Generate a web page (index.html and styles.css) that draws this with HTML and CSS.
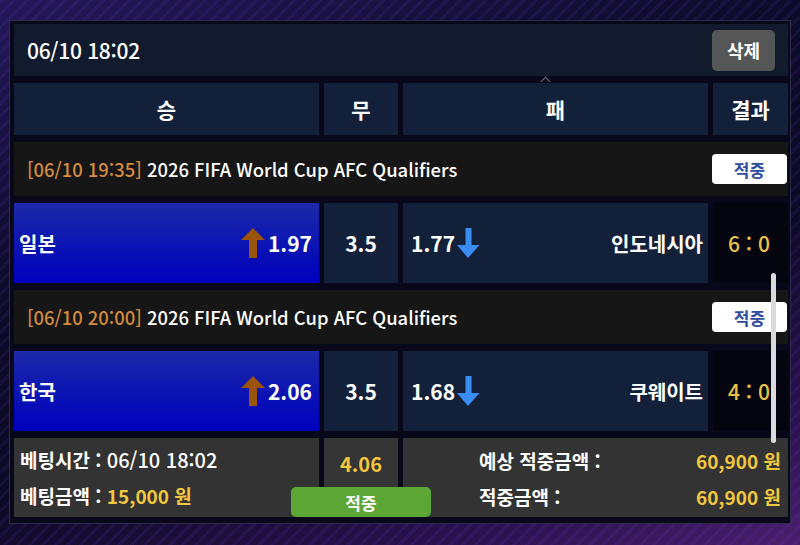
FILE: index.html
```html
<!DOCTYPE html>
<html lang="ko">
<head>
<meta charset="utf-8">
<title>베팅내역</title>
<link rel="stylesheet" href="styles.css">
</head>
<body>
<div class="frame">
  <div class="topbar">
    <span class="bet-time">06/10 18:02</span>
    <button class="del">삭제</button>
  </div>

  <div class="row head">
    <div class="hcell">승</div>
    <div class="hcell">무</div>
    <div class="hcell">패</div>
    <div class="hcell">결과</div>
  </div>

  <div class="league">
    <span class="ltext"><span class="ltime">[06/10 19:35]</span> 2026 FIFA World Cup AFC Qualifiers</span>
    <span class="badge">적중</span>
  </div>

  <div class="row match">
    <div class="home">
      <span class="team">일본</span>
      <span class="odds">
        <svg class="arr" width="24" height="30" viewBox="0 0 24 30"><polygon points="12,0 24,12 16,12 16,30 8,30 8,12 0,12" fill="#9a5309"/></svg>
        <span>1.97</span>
      </span>
    </div>
    <div class="draw">3.5</div>
    <div class="away">
      <span class="odds">
        <span>1.77</span>
        <svg class="arr" width="23" height="30" viewBox="0 0 23 30"><path d="M8.5 0h6v17h8l-11.5 13L0 17h8.5z" fill="#3a8cf2"/></svg>
      </span>
      <span class="team">인도네시아</span>
    </div>
    <div class="score">6 : 0</div>
  </div>

  <div class="league">
    <span class="ltext"><span class="ltime">[06/10 20:00]</span> 2026 FIFA World Cup AFC Qualifiers</span>
    <span class="badge">적중</span>
  </div>

  <div class="row match">
    <div class="home">
      <span class="team">한국</span>
      <span class="odds">
        <svg class="arr" width="24" height="30" viewBox="0 0 24 30"><polygon points="12,0 24,12 16,12 16,30 8,30 8,12 0,12" fill="#9a5309"/></svg>
        <span>2.06</span>
      </span>
    </div>
    <div class="draw">3.5</div>
    <div class="away">
      <span class="odds">
        <span>1.68</span>
        <svg class="arr" width="23" height="30" viewBox="0 0 23 30"><path d="M8.5 0h6v17h8l-11.5 13L0 17h8.5z" fill="#3a8cf2"/></svg>
      </span>
      <span class="team">쿠웨이트</span>
    </div>
    <div class="score">4 : 0</div>
  </div>

  <div class="row summary">
    <div class="sum-left">
      <div class="line"><b>베팅시간 :</b> <span class="val">06/10 18:02</span></div>
      <div class="line"><b>베팅금액 :</b> <span class="yellow b">15,000 원</span></div>
    </div>
    <div class="sum-mid">
      <span class="total">4.06</span>
      <span class="win">적중</span>
    </div>
    <div class="sum-right">
      <div class="sline"><b>예상 적중금액 :</b><span class="yellow b">60,900 원</span></div>
      <div class="sline"><b>적중금액 :</b><span class="yellow b">60,900 원</span></div>
    </div>
  </div>

  <div class="caret"></div>
  <div class="scrollbar"></div>
</div>
</body>
</html>
```

FILE: styles.css
```css
* { box-sizing: border-box; }
html, body { margin: 0; padding: 0; }
body {
  width: 800px;
  height: 545px;
  overflow: hidden;
  padding: 20px 9px 0 9px;
  font-family: "Noto Sans CJK KR", "Noto Sans", sans-serif;
  color: #fff;
  background:
    repeating-linear-gradient(135deg, rgba(120, 70, 220, 0.10) 0 3px, transparent 3px 9px),
    linear-gradient(160deg, #24185a 0%, #0d0b2a 35%, #0c0a26 60%, #2a1250 85%, #4a1f6e 100%);
}

.frame {
  position: relative;
  width: 782px;
  height: 504px;
  border: 1px solid #2d2b4a;
  background: #08081a;
  padding: 3px 0 0 4px;
  display: flex;
  flex-direction: column;
  gap: 7px;
}

.topbar {
  width: 774px;
  height: 52px;
  background: #111b2d;
  display: flex;
  align-items: center;
  justify-content: space-between;
  padding: 0 13px;
}
.bet-time { font-size: 21px; font-weight: 500; letter-spacing: -0.3px; }
.del {
  width: 63px;
  height: 41px;
  border: 0;
  border-radius: 5px;
  background: #565656;
  color: #fff;
  font-family: inherit;
  font-size: 18px;
  font-weight: 700;
  padding: 0;
}

.row {
  width: 774px;
  display: grid;
  grid-template-columns: 305px 74px 305px 75px;
  column-gap: 5px;
}
.head { height: 52px; }
.hcell {
  background: #13203a;
  display: flex;
  align-items: center;
  justify-content: center;
  font-size: 21px;
  font-weight: 700;
}

.league {
  width: 774px;
  height: 54px;
  background: #161616;
  display: flex;
  align-items: center;
  justify-content: space-between;
  padding-left: 13px;
}
.ltext { font-size: 18.4px; font-weight: 500; }
.ltime { color: #d58b3c; }
.badge {
  width: 75px;
  height: 30px;
  margin-right: 1px;
  border-radius: 4px;
  background: #fff;
  color: #2f4c9f;
  font-size: 17px;
  font-weight: 700;
  display: flex;
  align-items: center;
  justify-content: center;
}

.match { height: 80px; }
.home, .away {
  display: flex;
  align-items: center;
  justify-content: space-between;
  font-size: 21px;
  font-weight: 700;
}
.home {
  background: linear-gradient(180deg, #1d29a7 0%, #0d17b2 45%, #0000bd 100%);
  padding: 0 7px 0 5px;
}
.away {
  background: #13203a;
  padding: 0 5px 0 8px;
}
.team { font-size: 20px; }
.odds { display: flex; align-items: center; gap: 2px; }
.arr { display: block; }
.home .odds { gap: 3px; }
.draw {
  background: #13203a;
  display: flex;
  align-items: center;
  justify-content: center;
  font-size: 21px;
  font-weight: 700;
}
.score {
  background: #05050f;
  color: #e9c244;
  display: flex;
  align-items: center;
  justify-content: center;
  font-size: 21px;
  font-weight: 500;
  padding-right: 3px;
}

.summary { height: 79px; }
.sum-left {
  background: #333333;
  padding: 4px 0 0 6px;
  font-size: 19px;
}
.line { height: 36px; line-height: 36px; white-space: nowrap; }
.line b, .sline b { font-weight: 700; }
.val { font-size: 20px; font-weight: 500; }
.yellow { color: #f2c63e; }
.b { font-weight: 700; }
.sum-mid {
  background: #353535;
  display: flex;
  flex-direction: column;
  align-items: center;
  justify-content: space-between;
  padding-top: 13px;
  position: relative;
  z-index: 1;
}
.total { color: #f2c63e; font-size: 20px; font-weight: 700; line-height: 26px; }
.win {
  flex: none;
  width: 140px;
  height: 30px;
  border-radius: 5px;
  background: #5ba634;
  color: #fff;
  font-size: 17px;
  font-weight: 700;
  display: flex;
  align-items: center;
  justify-content: center;
}
.sum-right {
  grid-column: 3 / 5;
  background: #333333;
  padding: 4px 7px 0 76px;
  font-size: 19px;
}
.sline {
  height: 36px;
  display: flex;
  align-items: center;
  justify-content: space-between;
  white-space: nowrap;
}

.caret {
  position: absolute;
  left: 532px;
  top: 57px;
  width: 7px;
  height: 7px;
  border-left: 1.5px solid #6a6f80;
  border-top: 1.5px solid #6a6f80;
  transform: rotate(45deg);
}
.scrollbar {
  position: absolute;
  left: 761px;
  top: 252px;
  width: 5px;
  height: 170px;
  border-radius: 3px;
  background: #d9d9de;
  z-index: 2;
}
```
